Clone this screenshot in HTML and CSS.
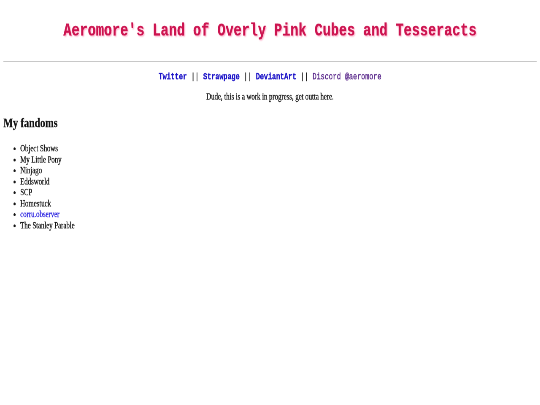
FILE: index.html
```html
<!DOCTYPE html>
<html>
<head>
<meta charset="utf-8">
<title>Aeromore's Land of Overly Pink Cubes and Tesseracts</title>
<link rel="stylesheet" href="styles.css">
</head>
<body>
<div class="frame">
<div class="page">
  <h1 class="title">Aeromore's Land of Overly Pink Cubes and Tesseracts</h1>
  <hr class="rule">
  <p class="links"><a class="link" href="#">Twitter</a> <span class="sep">||</span> <a class="link" href="#">Strawpage</a> <span class="sep">||</span> <a class="link" href="#">DeviantArt</a> <span class="sep">||</span> <span class="discord">Discord @aeromore</span></p>
  <p class="note">Dude, this is a work in progress, get outta here.</p>
  <h2 class="heading">My fandoms</h2>
  <ul class="fandoms">
    <li>Object Shows</li>
    <li>My Little Pony</li>
    <li>Ninjago</li>
    <li>Eddsworld</li>
    <li>SCP</li>
    <li>Homestuck</li>
    <li><a class="plain" href="#">corru.observer</a></li>
    <li>The Stanley Parable</li>
  </ul>
</div>
</div>
</body>
</html>
```
FILE: styles.css
```css
html, body {
  margin: 0;
  padding: 0;
  overflow: hidden;
  background: #ffffff;
}
.frame {
  width: 540px;
  height: 405px;
  overflow: hidden;
}
.page {
  box-sizing: border-box;
  width: 1280px;
  height: 720px;
  padding: 8px;
  transform: scale(0.421875, 0.5625);
  transform-origin: 0 0;
  will-change: transform;
  font-family: "Liberation Serif", "Times New Roman", serif;
  font-size: 16px;
  color: #151515;
  -webkit-text-stroke: 0.45px currentColor;
}
.title {
  font-family: "Liberation Mono", "Courier New", monospace;
  font-size: 32px;
  font-weight: bold;
  text-align: center;
  color: #cc1450;
  text-shadow: 2px 2px 3px #ffa8c4;
  margin: 28px 0 35px;
  -webkit-text-stroke: 0.4px currentColor;
}
.rule {
  border: none;
  border-top: 2px solid #c8c8c8;
  margin: 0;
}
.links {
  text-align: center;
  font-family: "Liberation Mono", "Courier New", monospace;
  font-size: 16px;
  margin: 18px 0 16px;
}
.sep {
  color: #222;
}
.link {
  color: #1c14c8;
  font-weight: bold;
  text-decoration: none;
}
.discord {
  color: #5b2a8c;
}
.note {
  text-align: center;
  margin: 17px 0 16px;
}
.heading {
  font-size: 24px;
  font-weight: bold;
  margin: 24px 0 22px;
}
.fandoms {
  margin: 0;
  padding-left: 40px;
}
.fandoms li {
  line-height: 19.5px;
}
.plain {
  color: #2a22e0;
  text-decoration: none;
}
```
